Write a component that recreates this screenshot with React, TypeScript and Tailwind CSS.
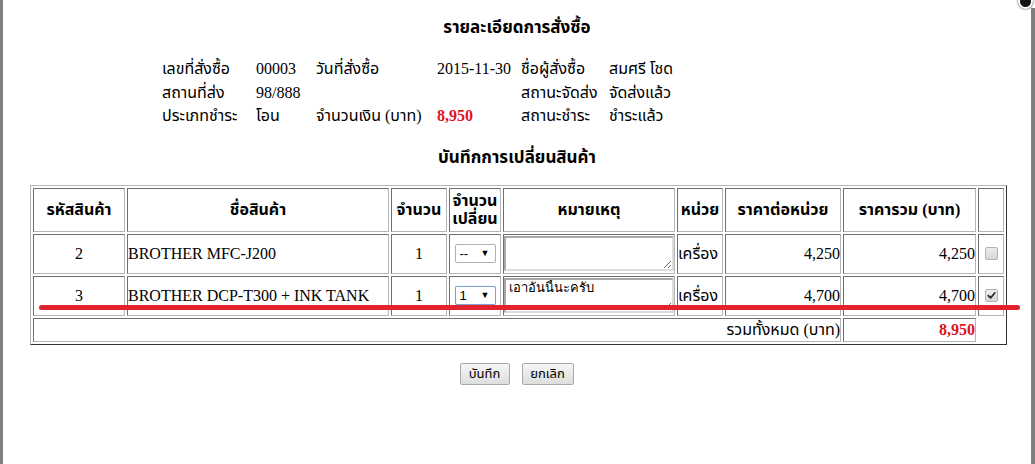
import React from 'react';

const thai = "font-['Liberation_Serif','Noto_Sans_Thai','Tahoma',serif]";

type Row = { id: string; name: string; qty: string; swap: string; note: string; unit: string; price: string; total: string; checked: boolean };

const rows: Row[] = [
  { id: '2', name: 'BROTHER MFC-J200', qty: '1', swap: '--', note: '', unit: 'เครื่อง', price: '4,250', total: '4,250', checked: false },
  { id: '3', name: 'BROTHER DCP-T300 + INK TANK', qty: '1', swap: '1', note: 'เอาอันนี้นะครับ', unit: 'เครื่อง', price: '4,700', total: '4,700', checked: true },
];

const cell = 'border border-solid border-t-[#6f6f6f] border-l-[#6f6f6f] border-b-[#b5b5b5] border-r-[#b5b5b5]';

const SwapSelect: React.FC<{ value: string; focused?: boolean }> = ({ value, focused }) => (
  <div
    className={`mx-auto flex h-[19px] w-[41px] items-center justify-between rounded-[2px] border bg-white pl-[4px] pr-[5px] font-['Liberation_Sans',sans-serif] text-[13px] text-black ${focused ? 'border-[#7da2ce] shadow-[0_0_1px_#9ec0e8]' : 'border-[#b0b0b0]'}`}
  >
    <span>{value}</span>
    <span className="text-[9px]">▼</span>
  </div>
);

const Check: React.FC<{ checked: boolean }> = ({ checked }) => (
  <div className="mx-auto flex h-[13px] w-[13px] items-center justify-center rounded-[2px] border border-[#b3b3b3] bg-gradient-to-b from-[#ededed] to-[#d6d6d6]">
    {checked && (
      <svg viewBox="0 0 10 10" className="h-[9px] w-[9px]">
        <path d="M1.5 5.2 L4 7.6 L8.6 2.2" fill="none" stroke="#2a2a2a" strokeWidth="2" strokeLinecap="round" strokeLinejoin="round" />
      </svg>
    )}
  </div>
);

export default function App() {
  return (
    <div className={`relative flex h-[464px] w-[1035px] overflow-hidden bg-white text-black ${thai}`}>
      <div className="w-[3px] shrink-0 bg-[#7f7f7f]" />
      <div className="flex w-[1028px] shrink-0 flex-col bg-white">
        <h1 className="mt-[16px] text-center text-[17px] font-bold leading-[24px]">รายละเอียดการสั่งซื้อ</h1>

        <div className="ml-[159px] mt-[17px] grid grid-cols-[94px_60px_121px_84px_88px_auto] text-[16px] leading-[23.5px]">
          <span>เลขที่สั่งซื้อ</span>
          <span>00003</span>
          <span>วันที่สั่งซื้อ</span>
          <span>2015-11-30</span>
          <span>ชื่อผู้สั่งซื้อ</span>
          <span>สมศรี โชด</span>

          <span>สถานที่ส่ง</span>
          <span>98/888</span>
          <span />
          <span />
          <span>สถานะจัดส่ง</span>
          <span>จัดส่งแล้ว</span>

          <span>ประเภทชำระ</span>
          <span>โอน</span>
          <span>จำนวนเงิน (บาท)</span>
          <span className="font-bold text-[#e0121b]">8,950</span>
          <span>สถานะชำระ</span>
          <span>ชำระแล้ว</span>
        </div>

        <h2 className="mt-[18px] text-center text-[17px] font-bold leading-[24px]">บันทึกการเปลี่ยนสินค้า</h2>

        <table className="ml-[27px] mt-[15px] w-[977px] table-fixed border-separate border-spacing-[2px] border border-solid border-t-[#b5b5b5] border-l-[#b5b5b5] border-b-[#333] border-r-[#333] text-[16px]">
          <thead>
            <tr className="h-[44px]">
              <th className={`${cell} w-[92px] font-bold`}>รหัสสินค้า</th>
              <th className={`${cell} w-[262px] font-bold`}>ชื่อสินค้า</th>
              <th className={`${cell} w-[56px] font-bold`}>จำนวน</th>
              <th className={`${cell} w-[52px] font-bold leading-[18px]`}>จำนวน<br />เปลี่ยน</th>
              <th className={`${cell} w-[172px] font-bold`}>หมายเหตุ</th>
              <th className={`${cell} w-[46px] font-bold`}>หน่วย</th>
              <th className={`${cell} w-[116px] font-bold`}>ราคาต่อหน่วย</th>
              <th className={`${cell} w-[133px] font-bold`}>ราคารวม (บาท)</th>
              <th className={`${cell} w-[26px]`} />
            </tr>
          </thead>
          <tbody>
            {rows.map((r) => (
              <tr key={r.id} className="h-[40px]">
                <td className={`${cell} text-center`}>{r.id}</td>
                <td className={`${cell} whitespace-nowrap`}>{r.name}</td>
                <td className={`${cell} text-center`}>{r.qty}</td>
                <td className={`${cell}`}>
                  <SwapSelect value={r.swap} focused={r.checked} />
                </td>
                <td className={`${cell} p-0`}>
                  <textarea
                    readOnly
                    defaultValue={r.note}
                    className="block h-[35px] w-full resize border-2 border-solid border-t-[#a8a8a8] border-l-[#a8a8a8] border-b-[#dcdcdc] border-r-[#dcdcdc] bg-white px-[3px] py-0 font-['Liberation_Sans',sans-serif] text-[13px] leading-[16px] outline-none"
                  />
                </td>
                <td className={`${cell}`}>{r.unit}</td>
                <td className={`${cell} text-right`}>{r.price}</td>
                <td className={`${cell} text-right`}>{r.total}</td>
                <td className={`${cell}`}>
                  <Check checked={r.checked} />
                </td>
              </tr>
            ))}
            <tr className="h-[24px]">
              <td colSpan={7} className={`${cell} text-right leading-[20px]`}>รวมทั้งหมด (บาท)</td>
              <td className={`${cell} text-right font-bold leading-[20px] text-[#e0121b]`}>8,950</td>
            </tr>
          </tbody>
        </table>

        <div className="mt-[18px] flex justify-center gap-[12px] pr-[1px] font-['Tahoma','Noto_Sans_Thai','Liberation_Sans',sans-serif] text-[13px]">
          <button className="h-[22px] w-[50px] rounded-[2px] border border-[#a9a9a9] bg-gradient-to-b from-[#f6f6f6] to-[#dedede] leading-[20px]">บันทึก</button>
          <button className="h-[22px] w-[52px] rounded-[2px] border border-[#a9a9a9] bg-gradient-to-b from-[#f6f6f6] to-[#dedede] leading-[20px]">ยกเลิก</button>
        </div>
      </div>
      <div className="mt-[8px] flex-1 bg-[#7f7f7f]" />

      {/* annotation stroke and close badge overlay */}
      <div className="absolute left-[39px] top-[305px] h-[5px] w-[981px] rounded-full bg-[#e2222d]" />
      <div className="absolute -top-[6px] left-[1018px] h-[15px] w-[15px] rounded-full border-2 border-white bg-[#111] shadow-[0_0_2px_#000]" />
    </div>
  );
}
